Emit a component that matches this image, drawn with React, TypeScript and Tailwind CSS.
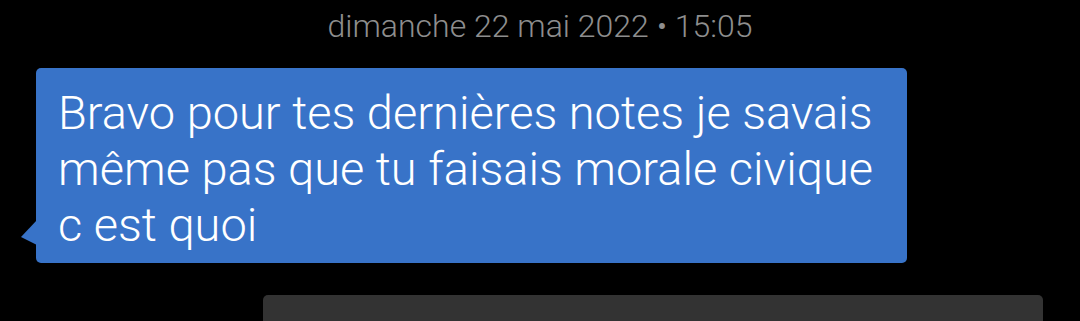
export default function App() {
  return (
    <div
      className="h-[321px] w-[1080px] overflow-hidden bg-black"
      style={{ fontFamily: '"Roboto Light", Roboto, "Noto Sans", sans-serif' }}
    >
      <div className="pt-[7px] text-center text-[32px] font-light leading-[38px] text-[#8e8e8e]">
        dimanche 22 mai 2022 • 15:05
      </div>

      <div className="relative ml-[36px] mt-[23px] w-[871px] rounded-[5px] bg-[#3873c8] pl-[22px] pr-4 pt-[17px] pb-[10px]">
        <svg
          className="absolute left-[-15px] top-[152px]"
          width="16"
          height="26"
          viewBox="0 0 16 26"
        >
          <path d="M16 0 L0 17 L16 25 Z" fill="#3873c8" />
        </svg>
        <p className="text-[47px] font-light leading-[56px] text-white">
          Bravo pour tes dernières notes je savais
          <br />
          même pas que tu faisais morale civique
          <br />
          c est quoi
        </p>
      </div>

      <div className="ml-[263px] mt-[32px] h-[40px] w-[780px] rounded-[5px] bg-[#333333]" />
    </div>
  );
}
